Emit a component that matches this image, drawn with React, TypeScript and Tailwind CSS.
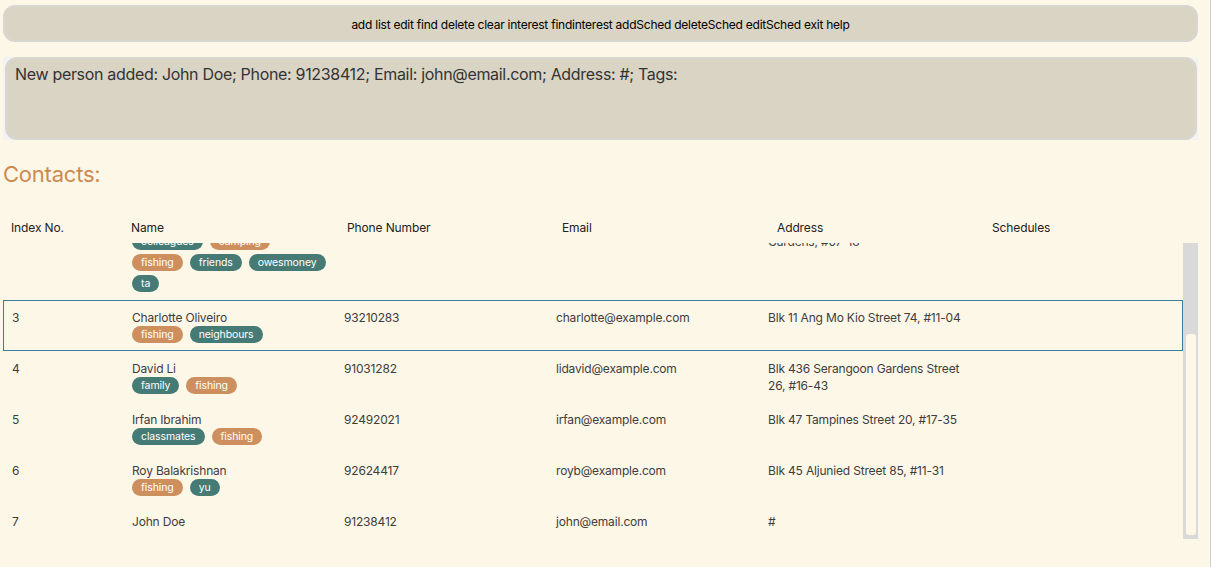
import React from 'react';

type Tag = { label: string; tone: 'orange' | 'teal' };

type Person = {
    index: number;
    name: string;
    phone: string;
    email: string;
    address: string;
    tags: Tag[];
};

const o = (label: string): Tag => ({ label, tone: 'orange' });
const t = (label: string): Tag => ({ label, tone: 'teal' });

// list is scrolled down: row 1 is off screen, row 2 partly hidden
const people: Person[] = [
    {
        index: 2,
        name: 'Bernice Yu',
        phone: '99272758',
        email: 'berniceyu@example.com',
        address: 'Blk 30 Lorong 3 Serangoon Gardens, #07-18',
        tags: [t('colleagues'), o('camping'), o('fishing'), t('friends'), t('owesmoney'), t('ta')],
    },
    { index: 3, name: 'Charlotte Oliveiro', phone: '93210283', email: 'charlotte@example.com', address: 'Blk 11 Ang Mo Kio Street 74, #11-04', tags: [o('fishing'), t('neighbours')] },
    { index: 4, name: 'David Li', phone: '91031282', email: 'lidavid@example.com', address: 'Blk 436 Serangoon Gardens Street 26, #16-43', tags: [t('family'), o('fishing')] },
    { index: 5, name: 'Irfan Ibrahim', phone: '92492021', email: 'irfan@example.com', address: 'Blk 47 Tampines Street 20, #17-35', tags: [t('classmates'), o('fishing')] },
    { index: 6, name: 'Roy Balakrishnan', phone: '92624417', email: 'royb@example.com', address: 'Blk 45 Aljunied Street 85, #11-31', tags: [o('fishing'), t('yu')] },
    { index: 7, name: 'John Doe', phone: '91238412', email: 'john@email.com', address: '#', tags: [] },
];

const commands = 'add list edit find delete clear interest findinterest addSched deleteSched editSched exit help';

const PersonRow = ({ person, selected }: { person: Person; selected: boolean }) => (
    <div className={`flex pt-[8px] pb-[7px] text-[12px] leading-[17px] tracking-[-0.015em] text-[#3d3d3d] border ${selected ? 'border-[#3b7c99]' : 'border-transparent'}`}>
        <div className="w-[128px] pl-[8px] shrink-0">{person.index}</div>
        <div className="w-[212px] shrink-0">
            <div>{person.name}</div>
            {person.tags.length > 0 && (
                <div className="flex flex-wrap w-[194.5px] gap-x-[7px] gap-y-[4px]">
                    {person.tags.map((tag) => (
                        <span
                            key={tag.label}
                            className={`h-[17px] px-[9px] rounded-full text-[10.5px] leading-[17px] tracking-[-0.01em] text-white ${tag.tone === 'orange' ? 'bg-[#cd8f5e]' : 'bg-[#467b75]'}`}
                        >
                            {tag.label}
                        </span>
                    ))}
                </div>
            )}
        </div>
        <div className="w-[212px] shrink-0">{person.phone}</div>
        <div className="w-[212px] shrink-0">{person.email}</div>
        <div className="w-[200px] shrink-0">{person.address}</div>
        <div className="flex-1" />
    </div>
);

export default function App() {
    return (
        <div className="w-[1211px] h-[567px] overflow-hidden bg-[#fdf7e8] border-r border-[#cfcfcf] flex flex-col" style={{ fontFamily: 'Inter, "Noto Sans", sans-serif' }}>
            {/* command bar */}
            <div className="ml-[3px] mr-[12px] mt-[5px] h-[37px] pt-[2px] rounded-[12px] bg-[#dad4c4] border-2 border-[#d8d6d1] flex items-center justify-center text-[12px] tracking-[-0.02em] text-black">
                {commands}
            </div>

            {/* result display */}
            <div className="ml-[3px] mr-[12px] mt-[15px] h-[83px] bg-[#f3f3f1]">
                <div className="ml-[2px] mr-[1px] h-full rounded-[12px] bg-[#dad4c4] border-2 border-[#d8d6d1] px-[8px] pt-[5px] text-[16px] leading-[20px] tracking-[-0.02em] text-[#333]">
                    New person added: John Doe; Phone: 91238412; Email: john@email.com; Address: #; Tags:
                </div>
            </div>

            <div className="ml-[3px] mt-[20px] text-[22px] leading-[28px] text-[#cd8a4f] tracking-[-0.01em]">Contacts:</div>

            {/* table header */}
            <div className="mt-[30px] h-[20px] flex items-center text-[12px] text-[#222] tracking-[-0.01em]">
                <div className="w-[131px] pl-[11px] shrink-0">Index No.</div>
                <div className="w-[216px] shrink-0">Name</div>
                <div className="w-[215px] shrink-0">Phone Number</div>
                <div className="w-[215px] shrink-0">Email</div>
                <div className="w-[215px] shrink-0">Address</div>
                <div>Schedules</div>
            </div>

            {/* list */}
            <div className="mt-[5px] ml-[3px] mr-[12px] h-[296px] flex">
                <div className="flex-1 overflow-hidden">
                    <div className="-mt-[36px]">
                        {people.map((p) => (
                            <PersonRow key={p.index} person={p} selected={p.index === 3} />
                        ))}
                    </div>
                </div>
                <div className="w-[15px] bg-[#d9d9d9] flex flex-col justify-end pb-[4px] items-center">
                    <div className="w-[10px] h-[201px] rounded-[3px] bg-[#fdf7e8]" />
                </div>
            </div>
        </div>
    );
}
